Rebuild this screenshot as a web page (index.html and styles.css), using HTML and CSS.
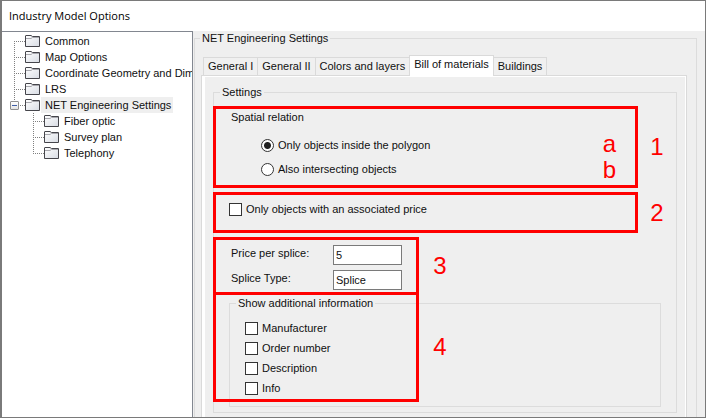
FILE: index.html
```html
<!DOCTYPE html>
<html lang="en">
<head>
<meta charset="utf-8">
<title>Industry Model Options</title>
<link rel="stylesheet" href="styles.css">
</head>
<body>
<svg class="defs" aria-hidden="true">
  <defs>
    <linearGradient id="folder-fill" x1="0" y1="0" x2="1" y2="1">
      <stop offset="0" stop-color="#ffffff"/>
      <stop offset="1" stop-color="#d8dce4"/>
    </linearGradient>
    <symbol id="folder" viewBox="0 0 16 14">
      <path d="M0.500 12V2Q0.500 1.500 1 1.500H6L7.500 2.500H14.500V12.500H0.500Z" fill="url(#folder-fill)" stroke="#45454b"/>
      <path d="M1 4.500H6L7.500 3.500H14" fill="none" stroke="#a8a8ae"/>
    </symbol>
  </defs>
</svg>
<div class="window">
  <header class="titlebar"><h1 class="title">Industry Model Options</h1></header>
  <div class="body">
    <nav class="tree">
      <ul class="branch">
        <li><a class="node" href="#"><svg class="icon"><use href="#folder"/></svg><span class="name">Common</span></a></li>
        <li><a class="node" href="#"><svg class="icon"><use href="#folder"/></svg><span class="name">Map Options</span></a></li>
        <li><a class="node" href="#"><svg class="icon"><use href="#folder"/></svg><span class="name">Coordinate Geometry and Dimensions</span></a></li>
        <li><a class="node" href="#"><svg class="icon"><use href="#folder"/></svg><span class="name">LRS</span></a></li>
        <li>
          <button class="expander" type="button" aria-label="Collapse"></button>
          <a class="node" href="#"><svg class="icon"><use href="#folder"/></svg><span class="name selected">NET Engineering Settings</span></a>
          <ul class="branch nested">
            <li><a class="node" href="#"><svg class="icon"><use href="#folder"/></svg><span class="name">Fiber optic</span></a></li>
            <li><a class="node" href="#"><svg class="icon"><use href="#folder"/></svg><span class="name">Survey plan</span></a></li>
            <li><a class="node" href="#"><svg class="icon"><use href="#folder"/></svg><span class="name">Telephony</span></a></li>
          </ul>
        </li>
      </ul>
    </nav>
    <main class="content">
      <fieldset class="group outer">
        <legend>NET Engineering Settings</legend>
        <div class="tabs" role="tablist">
          <button class="tab" type="button" role="tab">General I</button>
          <button class="tab" type="button" role="tab">General II</button>
          <button class="tab" type="button" role="tab">Colors and layers</button>
          <button class="tab active" type="button" role="tab" aria-selected="true">Bill of materials</button>
          <button class="tab" type="button" role="tab">Buildings</button>
        </div>
        <div class="panel" role="tabpanel">
          <fieldset class="group settings">
            <legend>Settings</legend>
            <div class="row first">
              <div class="box spatial">
                <p class="heading" id="spatial">Spatial relation</p>
                <div class="choices">
                  <div class="radios" role="radiogroup" aria-labelledby="spatial">
                    <label class="choice"><input class="radio" type="radio" name="relation" checked>Only objects inside the polygon</label>
                    <label class="choice"><input class="radio" type="radio" name="relation">Also intersecting objects</label>
                  </div>
                  <div class="letters"><span>a</span><span>b</span></div>
                </div>
              </div>
              <span class="number">1</span>
            </div>
            <div class="row">
              <div class="box price">
                <label class="choice"><input class="check" type="checkbox">Only objects with an associated price</label>
              </div>
              <span class="number">2</span>
            </div>
            <div class="row narrow">
              <div class="box splice">
                <label for="cost">Price per splice:</label><input class="text" id="cost" type="text" value="5">
                <label for="type">Splice Type:</label><input class="text" id="type" type="text" value="Splice">
              </div>
              <span class="number">3</span>
            </div>
            <div class="additional">
              <fieldset class="group">
                <legend>Show additional information</legend>
                <div class="checks">
                  <label class="choice"><input class="check" type="checkbox">Manufacturer</label>
                  <label class="choice"><input class="check" type="checkbox">Order number</label>
                  <label class="choice"><input class="check" type="checkbox">Description</label>
                  <label class="choice"><input class="check" type="checkbox">Info</label>
                </div>
              </fieldset>
              <div class="row narrow overlay"><div class="box"></div><span class="number">4</span></div>
            </div>
          </fieldset>
        </div>
      </fieldset>
    </main>
  </div>
</div>
</body>
</html>
```
FILE: styles.css
```css
* { box-sizing: border-box; }

body {
  margin: 0;
  color: #101010;
  font: 11px/16px "Liberation Sans", Arial, sans-serif;
}

.defs { position: absolute; width: 0; height: 0; }

.window {
  display: flex;
  flex-direction: column;
  height: 100vh;
  overflow: hidden;
  border: 1px solid #7a7a7a;
  border-left-width: 2px;
  background: #efefef;
}

.titlebar { padding: 7px; background: #fff; }

.title {
  margin: 0;
  color: #000;
  font: 11px/16px "Open Sans", "Noto Sans", sans-serif;
}

.body { display: flex; flex: 1; min-height: 0; }

/* Navigation tree */
.tree {
  flex: none;
  width: 191px;
  padding: 1px 1px 0 0;
  overflow: hidden;
  border: solid #828790;
  border-width: 1px 1px 0 0;
  background: #fff;
}

.branch {
  position: relative;
  margin: 0;
  padding: 0 0 0 12px;
  list-style: none;
}

.branch::before {
  content: "";
  position: absolute;
  top: 8px;
  left: 12px;
  width: 1px;
  height: 64px;
  background: repeating-linear-gradient(#808080 0 1px, transparent 1px 2px);
}

.nested { padding-left: 19px; }
.nested::before { top: 0; left: 19px; height: 40px; }

.branch li { position: relative; }

.node {
  display: flex;
  align-items: center;
  height: 16px;
  color: inherit;
  text-decoration: none;
  white-space: nowrap;
}

.node::before {
  content: "";
  flex: none;
  width: 11px;
  height: 1px;
  background: repeating-linear-gradient(90deg, #808080 0 1px, transparent 1px 2px);
}

.icon { flex: none; width: 16px; height: 14px; }
.name { padding: 0 2px 0 4px; }
.selected { background: #efefef; }

.expander {
  position: absolute;
  top: 4px;
  left: -4px;
  width: 9px;
  height: 9px;
  padding: 0;
  border: 1px solid #919191;
  border-radius: 1px;
  background: linear-gradient(#3f5fa8, #3f5fa8) center / 5px 1px no-repeat, linear-gradient(#fff, #e4e4e4);
}

/* Group boxes */
.content { flex: 1; min-width: 0; padding: 0 8px 0 1px; }

.group {
  min-width: 0;
  margin: 0;
  padding: 0;
  border: 1px solid #dcdcdc;
}

.group > legend { margin-left: 6px; padding: 0 2px; }

.outer { height: 100%; border-bottom: 0; }
.outer > legend { margin-left: 5px; line-height: 14px; }

/* Tabs */
.tabs {
  display: flex;
  align-items: flex-end;
  height: 30px;
  padding-left: 8px;
}

.tab {
  height: 18px;
  margin-right: -1px;
  padding: 0 4px;
  border: 1px solid #dadada;
  border-bottom: 0;
  background: #f0f0f0;
  color: inherit;
  font: inherit;
  line-height: 15px;
  white-space: nowrap;
}

.active {
  z-index: 1;
  height: 21px;
  margin-bottom: -1px;
  padding-bottom: 3px;
  background: #fff;
}

.panel {
  margin: 0 9px 0 6px;
  padding: 8px 9px 4px 11px;
  border: 1px solid #dadada;
  border-bottom: 0;
  box-shadow: inset 0 1px #fff, inset 3px 0 #fff, inset -1px 0 #fff;
}

.settings { padding-bottom: 5px; }

/* Numbered boxes */
.row {
  display: grid;
  grid-template-columns: 1fr 38px;
  align-items: center;
  margin: 4px 0 0 -1px;
}

.first { margin-top: 6px; }
.narrow { grid-template-columns: 206px 42px; }

.box { border: 3px solid #f00; }

.number, .letters {
  color: #f00;
  font: 24px/28px "Liberation Sans", sans-serif;
  text-align: center;
}

.spatial { padding: 0 19px 4px 15px; }
.heading { margin: 0 0 8px; }
.choices { display: flex; justify-content: space-between; padding-left: 30px; }
.radios .choice { height: 24px; }
.letters { line-height: 26px; display: grid; height: 48px; margin-top: -2px; }

.choice { display: flex; align-items: center; gap: 4px; }

.price { padding: 6px 13px 13px; }

.splice {
  display: grid;
  grid-template-columns: 102px 69px;
  gap: 5px 0;
  padding: 5px 0 2px 15px;
}

/* Form controls */
.text {
  width: 100%;
  height: 20px;
  padding: 0 2px;
  border: 1px solid #7a7a7a;
  background: #fff;
  color: inherit;
  font: inherit;
}

.check, .radio {
  appearance: none;
  flex: none;
  width: 13px;
  height: 13px;
  margin: 0;
  border: 1px solid #333;
  background: #fff;
}

.radio { border-radius: 50%; }
.radio:checked { background: radial-gradient(circle, #222 3px, #fff 4px); }

.additional { position: relative; margin: 0 15px; }
.checks { display: grid; grid-auto-rows: 20px; padding: 7px 15px 8px; }

.overlay {
  position: absolute;
  top: -3px;
  bottom: 5px;
  left: -15px;
  margin-top: 0;
}

.overlay .box { height: 100%; }
```
